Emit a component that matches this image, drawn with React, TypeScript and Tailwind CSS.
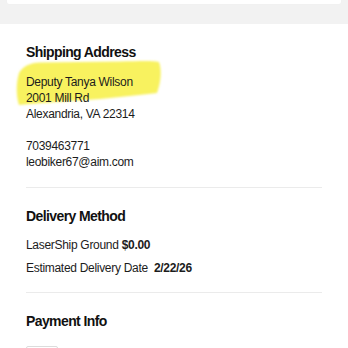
import React from "react";

function Highlight() {
  return (
    <svg
      className="absolute left-0 top-0 pointer-events-none"
      width="348"
      height="348"
      viewBox="0 0 348 348"
    >
      <defs>
        <filter id="soft" x="-10%" y="-10%" width="120%" height="120%">
          <feGaussianBlur stdDeviation="1.2" />
        </filter>
      </defs>
      <path
        d="M19 73 C 23 66, 30 63, 40 62.5 L 120 61.5 C 140 61, 153 60.5, 159 62 C 162 70, 161 82, 157 93 C 140 95, 120 97, 100 99 C 70 101, 40 103, 19 105 C 16 96, 16 83, 19 73 Z"
        fill="#f8f25e"
        filter="url(#soft)"
      />
    </svg>
  );
}

export default function App() {
  return (
    <div
      className="relative w-[348px] h-[348px] overflow-hidden bg-white text-[#1c1c1c]"
      style={{ fontFamily: '"Liberation Sans", Arial, sans-serif' }}
    >
      <div className="h-[24px] bg-[#f2f2f2] px-[7px]">
        <div className="h-[4px] bg-white rounded-b-[2px] shadow-[0_0_1px_rgba(0,0,0,0.05)]" />
      </div>
      <Highlight />
      <div className="relative px-[26px]">
        <h2 className="mt-[20px] text-[14px] leading-[16px] font-bold text-[#111] tracking-[-0.6px]">
          Shipping Address
        </h2>
        <div className="mt-[14px] text-[12px] leading-[16px] tracking-[-0.3px]">
          <div>Deputy Tanya Wilson</div>
          <div>2001 Mill Rd</div>
          <div>Alexandria, VA 22314</div>
          <div className="mt-[16px]">7039463771</div>
          <div>leobiker67@aim.com</div>
        </div>
        <div className="mt-[17px] h-px bg-[#ebebeb]" />
        <h2 className="mt-[20px] text-[14px] leading-[16px] font-bold text-[#111] tracking-[-0.6px]">
          Delivery Method
        </h2>
        <div className="mt-[13px] flex flex-col gap-[7px] text-[12px] leading-[16px] tracking-[-0.3px]">
          <div>
            LaserShip Ground <span className="font-bold">$0.00</span>
          </div>
          <div>
            Estimated Delivery Date&nbsp; <span className="font-bold">2/22/26</span>
          </div>
        </div>
        <div className="mt-[16px] h-px bg-[#ebebeb]" />
        <h2 className="mt-[20px] text-[14px] leading-[16px] font-bold text-[#111] tracking-[-0.6px]">
          Payment Info
        </h2>
        <div className="mt-[17px] w-[32px] h-[20px] rounded-[2px] border border-[#dcdcdc]" />
      </div>
    </div>
  );
}
